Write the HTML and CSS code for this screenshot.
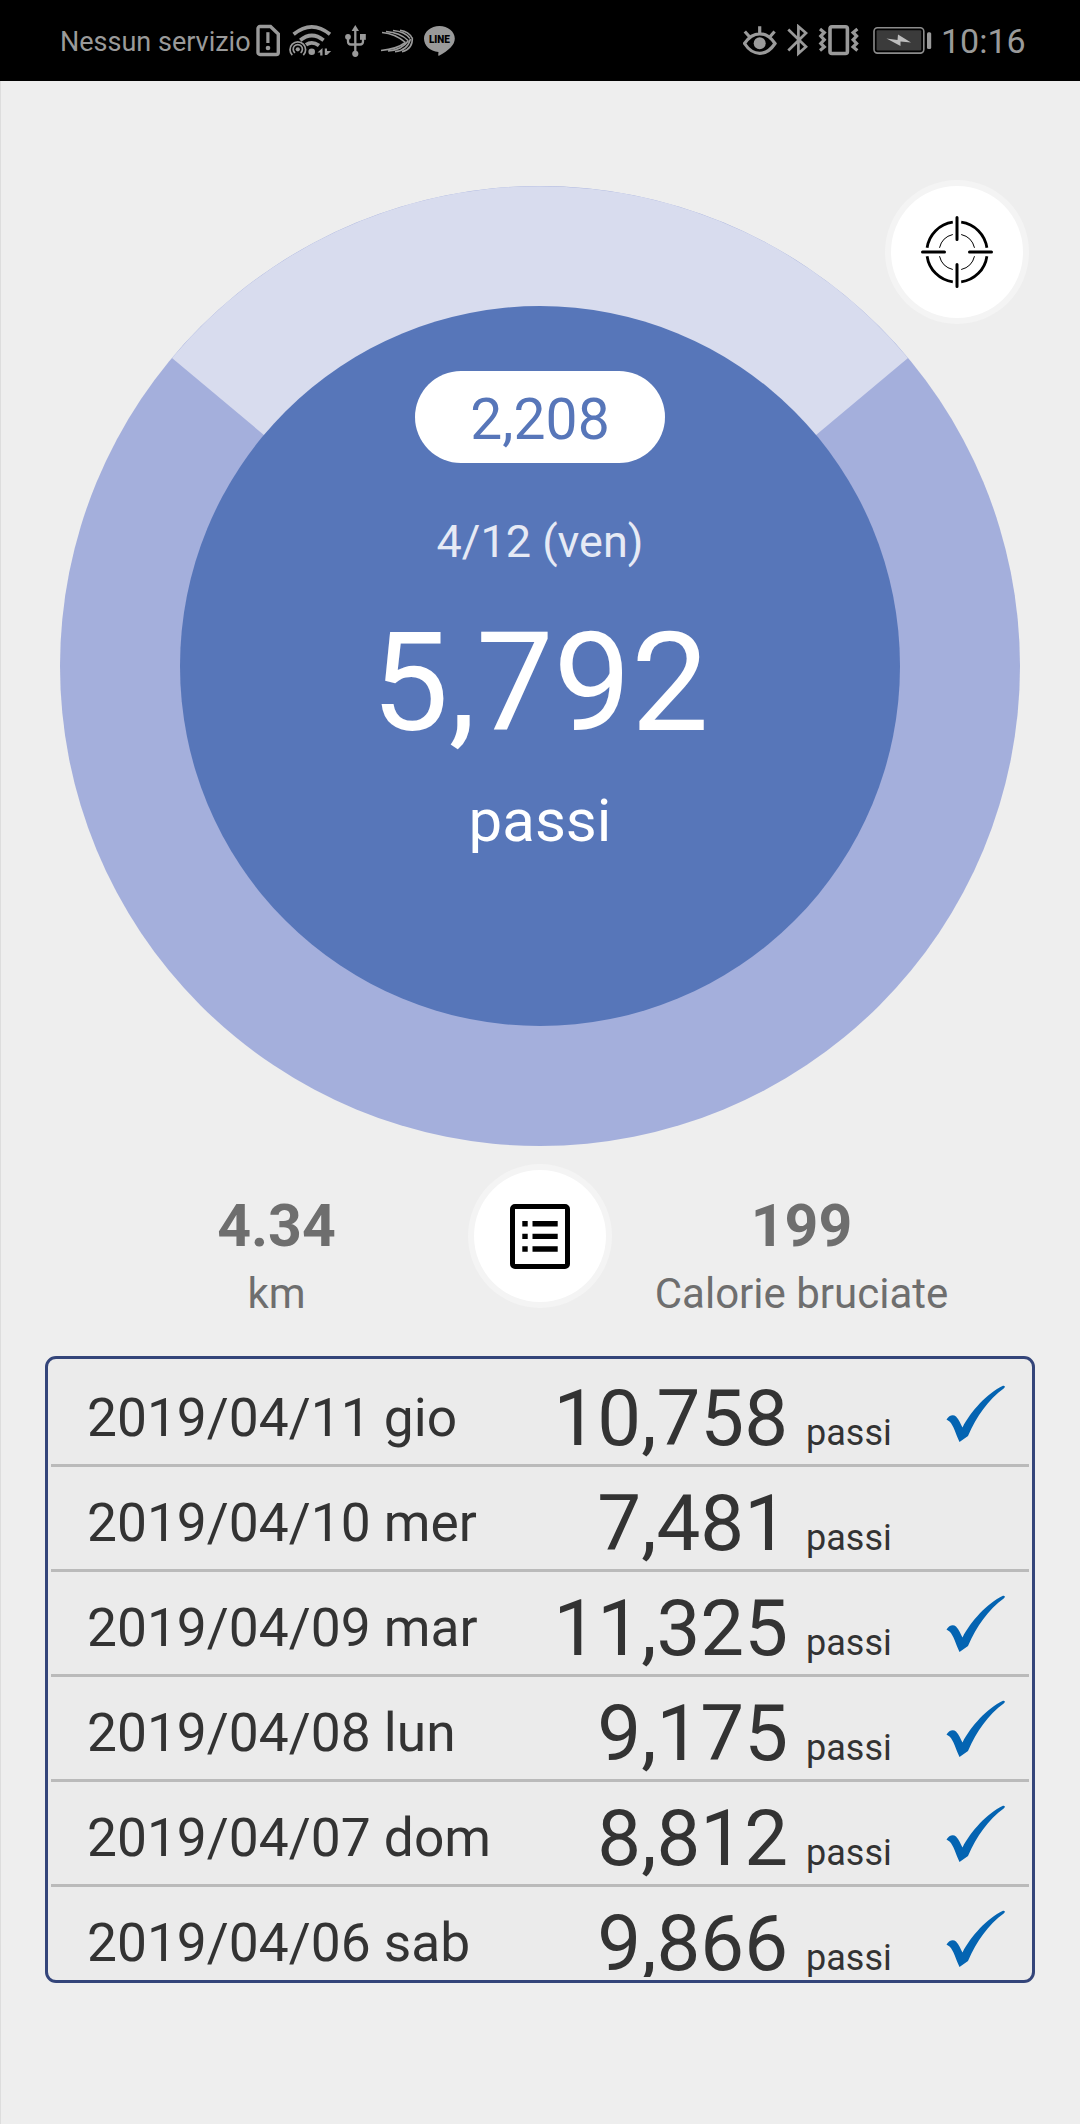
FILE: index.html
```html
<!DOCTYPE html>
<html lang="it">
<head>
    <meta charset="UTF-8">
    <meta name="viewport" content="width=device-width, initial-scale=1.0">
    <title>Contapassi</title>
    <link rel="stylesheet" href="styles.css">
</head>
<body>
    <!-- status bar -->
    <div class="status">
        <div class="status-left">
            <span class="carrier">Nessun servizio</span>
            <svg class="ic-sim" width="25" height="33" viewBox="0 0 25 33">
                <path d="M4 2.5H14.5L22.3 10V28.5A2 2 0 0 1 20.3 30.5H4A2 2 0 0 1 2 28.5V4.5A2 2 0 0 1 4 2.5Z" fill="none" stroke="#9a9a9a" stroke-width="3.4"/>
                <rect x="10.3" y="8.2" width="3.2" height="10.8"/>
                <circle cx="12" cy="24" r="2.3"/>
            </svg>
            <svg class="ic-wifi" width="43" height="33" viewBox="0 0 43 33">
                <g fill="none" stroke="#9a9a9a" stroke-width="3.7">
                    <path d="M4.6 10.3Q22.8 -4.6 41 10.3"/>
                    <path d="M11.2 16.2Q22.8 6.8 34.6 16.2"/>
                    <path d="M17 20.8Q23 16.4 30 21.6"/>
                </g>
                <g fill="none" stroke="#9a9a9a" stroke-width="1.7">
                    <path d="M3.3 31.2A7.8 7.8 0 1 1 14.3 31.2"/>
                    <path d="M6 28.8A4.6 4.6 0 1 1 11.6 28.8"/>
                </g>
                <circle cx="8.8" cy="25.3" r="2.1"/>
                <circle cx="22.7" cy="27.7" r="3.3"/>
                <path d="M28.5 28.5L33.5 24V31.5H31.2V28.5ZM35.8 24.5H38V27H42.200L38 31H35.8Z"/>
            </svg>
            <svg class="ic-usb" width="22" height="33" viewBox="0 0 22 33">
                <path d="M10.3 30V5M3 13V17.5Q3 20.5 6 20.5H15Q18 20.5 18 17.5V13" fill="none" stroke="#9a9a9a" stroke-width="2.3"/>
                <path d="M10.3 1L14 7H6.6Z"/>
                <circle cx="3" cy="12.8" r="2.9"/>
                <rect x="15" y="10" width="5.8" height="5.8"/>
                <circle cx="10.3" cy="29.8" r="3.1"/>
            </svg>
            <svg class="ic-swift" width="34" height="33" viewBox="0 0 34 33">
                <g fill="none" stroke="#9a9a9a" stroke-width="1.6">
                    <path d="M2 8.500Q15 9.500 25.500 18.500"/>
                    <path d="M6 7.500Q20 8.500 28 16.500"/>
                    <path d="M13 6.500Q25 7.500 30 14.500"/>
                    <path d="M20 6.200Q29 7.500 32 14"/>
                    <path d="M1 26.500Q17 25 25.500 18.500"/>
                    <path d="M8 27Q22 26 28.500 16.500"/>
                    <path d="M15 27.600Q27 27 30.500 15"/>
                    <path d="M22 27.800Q33 25 32.300 13.500"/>
                </g>
            </svg>
            <svg class="ic-line" width="32" height="33" viewBox="0 0 32 33">
                <path d="M15.400 2C24 2 30.800 7.600 30.800 14.600C30.800 21 25 26.500 15 31.800C14.300 32 14 31.500 14.500 28C6 27.500 0 21.800 0 14.600C0 7.600 7 2 15.400 2Z"/>
                <text class="line-text" x="15.400" y="19" text-anchor="middle" textLength="21">LINE</text>
            </svg>
        </div>
        <div class="status-right">
            <svg class="ic-eye" width="34" height="33" viewBox="0 0 34 33">
                <path d="M1.500 19.500Q8 9.800 16.700 9.800T32 19.500Q25.500 29.300 16.700 29.300T1.500 19.500ZM16.700 9V2.200M6.300 12.500L1.800 7.500M27.200 12.500L31.600 7.500" fill="none" stroke="#9a9a9a" stroke-width="3.200"/>
                <circle cx="16.700" cy="19.300" r="6"/>
            </svg>
            <svg class="ic-bt" width="22" height="33" viewBox="0 0 22 33">
                <path d="M1.300 5.500L19 22.800L11.400 29.500V2.500L19 9L1.300 26.500" fill="none" stroke="#9a9a9a" stroke-width="2.700"/>
            </svg>
            <svg class="ic-vib" width="42" height="33" viewBox="0 0 42 33">
                <g fill="none" stroke="#9a9a9a">
                    <rect x="12" y="2.700" width="17.400" height="26.800" rx="2" stroke-width="3.600"/>
                    <path d="M2 5L6.300 8.500L2.800 12L6.300 15.800L2.800 19.500L6.300 23L2 26.500M39.400 5L35.100 8.500L38.600 12L35.100 15.800L38.600 19.500L35.100 23L39.400 26.500" stroke-width="3.200"/>
                </g>
            </svg>
            <svg class="ic-batt" width="59" height="33" viewBox="0 0 59 33">
                <rect x="1" y="3.700" width="49.800" height="25.400" rx="3.500" fill="none" stroke="#8c8c8c" stroke-width="1.600"/>
                <rect x="3.600" y="6.200" width="44.600" height="20.400" rx="1" fill="#3b3b3b"/>
                <path d="M13.500 14.500L24.500 16L25 10.500L38 18.500L27.500 17.500V22Z" fill="#bdbdbd"/>
                <rect x="54" y="8.300" width="4.200" height="16.600" rx="1.500"/>
            </svg>
            <span class="clock">10:16</span>
        </div>
    </div>

    <div class="main">
        <!-- daily goal ring -->
        <div class="ring">
            <svg class="ring-bg" width="960" height="960" viewBox="0 0 960 960">
                <circle cx="480" cy="480" r="480" fill="#a4afdc"/>
                <path d="M480 480L112 172A480 480 0 0 1 848 172Z" fill="#d8dcee"/>
                <circle cx="480" cy="480" r="360" fill="#5776b9"/>
            </svg>
            <div class="ring-content">
                <div class="remaining">2,208</div>
                <div class="today">4/12 (ven)</div>
                <div class="steps">5,792</div>
                <div class="unit">passi</div>
            </div>
        </div>
        <a class="round-btn target-btn" href="javascript:;">
            <svg width="74" height="74" viewBox="0 0 74 74">
                <g fill="none" stroke="#000">
                    <path d="M41.200 7.100A30.200 30.200 0 0 1 66.900 32.800M66.900 41.200A30.200 30.200 0 0 1 41.200 66.900M32.800 66.900A30.200 30.200 0 0 1 7.100 41.200M7.100 32.800A30.200 30.200 0 0 1 32.800 7.100" stroke-width="2.800"/>
                    <path d="M41.200 19.500A18 18 0 0 1 54.500 32.800M54.500 41.200A18 18 0 0 1 41.200 54.500M32.800 54.500A18 18 0 0 1 19.500 41.200M19.500 32.800A18 18 0 0 1 32.800 19.500" stroke-width="1"/>
                    <path d="M37 2.500V24.500M37 49.500V71.500M2.500 37H24.500M49.500 37H71.500" stroke-width="3" stroke-linecap="round"/>
                </g>
            </svg>
        </a>

        <div class="stats">
            <div class="stat">
                <div class="stat-value">4.34</div>
                <div class="stat-label">km</div>
            </div>
            <a class="round-btn" href="javascript:;">
                <svg width="60" height="65" viewBox="0 0 60 65">
                    <rect x="2.500" y="2.500" width="55" height="60" rx="2.500" fill="none" stroke="#000" stroke-width="5"/>
                    <path d="M12.300 17h5.400v5.500h-5.400zM22.500 17h25.200v5.500H22.500zM12.300 29.700h5.400v5.400h-5.400zM22.500 29.700h25.200v5.400H22.500zM12.300 42.200h5.400v5.500h-5.400zM22.500 42.200h25.200v5.500H22.500z"/>
                </svg>
            </a>
            <div class="stat">
                <div class="stat-value">199</div>
                <div class="stat-label">Calorie bruciate</div>
            </div>
        </div>

        <svg class="defs" width="0" height="0">
            <symbol id="check" viewBox="0 0 60 58">
                <path d="M0.500 34.500C3 30.500 7 29 10 31.500C13 34.500 14.500 39 16.500 42.500C25 26 41 8.500 57 0.800C59 0.500 59.500 2 58 3.200C42 15 31 30.500 22 51L13.500 57C10 49.500 7.500 40 3.500 36.500Z" fill="#0464b2"/>
            </symbol>
        </svg>
        <!-- history, the last row is cut by the frame -->
        <div class="history">
            <div class="rows">
                <div class="row">
                    <span class="date">2019/04/11 gio</span>
                    <span class="count">10,758</span>
                    <span class="label">passi</span>
                    <svg class="check"><use href="#check"/></svg>
                </div>
                <div class="row">
                    <span class="date">2019/04/10 mer</span>
                    <span class="count">7,481</span>
                    <span class="label">passi</span>
                </div>
                <div class="row">
                    <span class="date">2019/04/09 mar</span>
                    <span class="count">11,325</span>
                    <span class="label">passi</span>
                    <svg class="check"><use href="#check"/></svg>
                </div>
                <div class="row">
                    <span class="date">2019/04/08 lun</span>
                    <span class="count">9,175</span>
                    <span class="label">passi</span>
                    <svg class="check"><use href="#check"/></svg>
                </div>
                <div class="row">
                    <span class="date">2019/04/07 dom</span>
                    <span class="count">8,812</span>
                    <span class="label">passi</span>
                    <svg class="check"><use href="#check"/></svg>
                </div>
                <div class="row">
                    <span class="date">2019/04/06 sab</span>
                    <span class="count">9,866</span>
                    <span class="label">passi</span>
                    <svg class="check"><use href="#check"/></svg>
                </div>
            </div>
        </div>
    </div>
</body>
</html>
```

FILE: styles.css
```css
*{
    box-sizing: border-box;
}
body{
    margin: 0;
    width: 1080px;
    height: 2124px;
    overflow: hidden;
    background: #eeeeee;
    font-family: Roboto, "Liberation Sans", sans-serif;
    color: #333333;
}
a{
    color: #000000;
    text-decoration: none;
}
svg{
    display: block;
    flex: none;
}
.status{
    display: flex;
    justify-content: space-between;
    height: 81px;
    padding: 0 55px 0 60px;
    background: #000000;
    color: #9a9a9a;
    fill: #9a9a9a;
}
.status-left,
.status-right{
    display: flex;
    align-items: center;
}
.carrier{
    width: 196px;
    font-size: 27px;
    line-height: 30px;
    padding-top: 3px;
    white-space: nowrap;
}
.ic-wifi{
    margin-left: 8px;
}
.ic-usb,
.ic-swift{
    margin-left: 13px;
}
.ic-line{
    margin-left: 10px;
}
.line-text{
    font-size: 10px;
    font-weight: 900;
    fill: #000000;
}
.ic-bt{
    margin-left: 10px;
}
.ic-vib{
    margin-left: 9px;
}
.ic-batt{
    margin-left: 13px;
}
.clock{
    width: 84px;
    margin-left: 9px;
    font-size: 34px;
    line-height: 34px;
}
.main{
    position: relative;
    height: 2043px;
    padding-top: 105px;
    border-left: 1px solid #dddddd;
    padding-right: 1px;
}
.ring{
    position: relative;
    width: 960px;
    height: 960px;
    margin: 0 auto;
}
.ring-bg{
    position: absolute;
    left: 0;
    top: 0;
}
.ring-content{
    position: relative;
    display: flex;
    flex-direction: column;
    align-items: center;
    padding-top: 185px;
    color: #ffffff;
}
.remaining{
    width: 250px;
    height: 92px;
    border-radius: 46px;
    background: #ffffff;
    color: #5776b9;
    font-size: 57px;
    line-height: 97px;
    text-align: center;
}
.today{
    margin-top: 54px;
    font-size: 45px;
    line-height: 50px;
    color: #e6eaf5;
}
.steps{
    margin-top: 47px;
    font-size: 138px;
    line-height: 138px;
}
.unit{
    margin-top: 38px;
    font-size: 60px;
    line-height: 62px;
}
.round-btn{
    display: flex;
    align-items: center;
    justify-content: center;
    width: 132px;
    height: 132px;
    border-radius: 50%;
    background: #ffffff;
    box-shadow: 0 0 0 6px #f4f4f4;
}
.target-btn{
    position: absolute;
    top: 105px;
    right: 57px;
}
.stats{
    display: grid;
    grid-template-columns: 393px 132px 393px;
    justify-content: center;
    height: 186px;
    margin-top: 24px;
    color: #6e6e6e;
    text-align: center;
}
.stat{
    padding-top: 26px;
    padding-right: 2px;
}
.stat-value{
    font-size: 59px;
    line-height: 60px;
    font-weight: bold;
}
.stat-label{
    margin-top: 13px;
    font-size: 42px;
    line-height: 50px;
}
.defs{
    position: absolute;
}
.history{
    width: 990px;
    height: 627px;
    margin: 0 auto;
    padding: 3px;
    border: 3px solid #34457a;
    border-radius: 11px;
    background: #ebebeb;
}
.rows{
    height: 615px;
    overflow: hidden;
}
.row{
    display: flex;
    height: 105px;
    padding-left: 36px;
    border-bottom: 3px solid #bababa;
}
.date{
    width: 423px;
    font-size: 53.3px;
    line-height: 112px;
}
.count{
    width: 278px;
    font-size: 78px;
    line-height: 113px;
    text-align: right;
}
.label{
    width: 158px;
    padding-left: 18px;
    font-size: 36px;
    line-height: 142px;
}
.check{
    width: 60px;
    height: 58px;
    margin-top: 23px;
}
```
